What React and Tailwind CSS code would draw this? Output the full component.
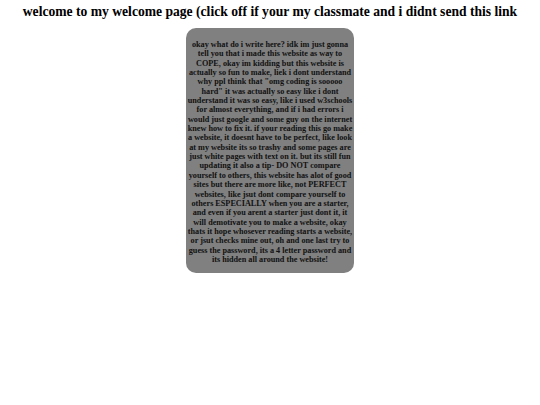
export default function App() {
  return (
    <div className="min-h-[405px] bg-white font-['Liberation_Serif',serif] text-black">
      <h1 className="pt-[4px] text-center text-[13.6px] leading-[16px] font-bold">
        welcome to my welcome page (click off if your my classmate and i didnt send this link
      </h1>
      <div className="mx-auto mt-[8px] w-[168px] rounded-[10px] bg-[#808080] px-[1px] pt-[12px] pb-[9px] text-center text-[8.2px] leading-[9.35px] font-bold text-[#111]">
        okay what do i write here? idk im just gonna tell you that i made this website as way to COPE, okay im kidding but this website is actually so fun to make, liek i dont understand why ppl think that "omg coding is sooooo hard" it was actually so easy like i dont understand it was so easy, like i used w3schools for almost everything, and if i had errors i would just google and some guy on the internet knew how to fix it. if your reading this go make a website, it doesnt have to be perfect, like look at my website its so trashy and some pages are just white pages with text on it. but its still fun updating it also a tip- DO NOT compare yourself to others, this website has alot of good sites but there are more like, not PERFECT websites, like jsut dont compare yourself to others ESPECIALLY when you are a starter, and even if you arent a starter just dont it, it will demotivate you to make a website, okay thats it hope whosever reading starts a website, or jsut checks mine out, oh and one last try to guess the password, its a 4 letter password and its hidden all around the website!
      </div>
    </div>
  );
}
